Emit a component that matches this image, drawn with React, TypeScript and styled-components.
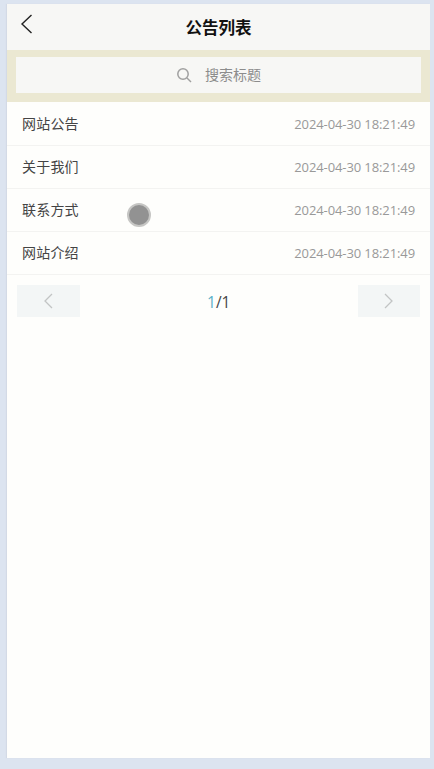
import React from "react";
import styled, { createGlobalStyle } from "styled-components";

const Global = createGlobalStyle`
  html, body { margin: 0; padding: 0; background: #dce4f0; }
  body { font-family: "Open Sans", "Noto Sans CJK SC", sans-serif; }
`;

const Page = styled.div`
  width: 434px;
  height: 769px;
  padding: 4px 4px 11px 7px;
  box-sizing: border-box;
  overflow: hidden;
`;

const Card = styled.div`
  position: relative;
  height: 754px;
  background: #fefefc;
  box-shadow: -1px 0 1px #d3dae6;
`;

const Header = styled.header`
  position: relative;
  height: 46px;
  background: #f7f7f5;
  display: flex;
  align-items: center;
  justify-content: center;
`;

const BackIcon = styled.svg`
  position: absolute;
  left: 13px;
  top: 10px;
`;

const Title = styled.h1`
  margin: 0;
  font: 700 16.5px "Noto Sans CJK SC", sans-serif;
  color: #111;
`;

const SearchBand = styled.div`
  height: 52px;
  padding: 7px 9px 9px;
  box-sizing: border-box;
  background: #ebe8d2;
`;

const SearchBox = styled.div`
  height: 36px;
  background: #f7f7f5;
  display: flex;
  align-items: center;
  justify-content: center;
  gap: 13px;
  color: #8c8c8c;
  font: 400 14px "Noto Sans CJK SC", sans-serif;
`;

const SearchText = styled.span`
  margin-top: -2px;
`;

const List = styled.ul`
  list-style: none;
  margin: 1px 0 0;
  padding: 0;
`;

const Row = styled.li`
  height: 43px;
  box-sizing: border-box;
  padding: 0 15px 1px;
  border-bottom: 1px solid #f3f3f1;
  display: flex;
  align-items: center;
  justify-content: space-between;
`;

const RowTitle = styled.span`
  margin-top: -2px;
  font: 400 14px "Noto Sans CJK SC", sans-serif;
  letter-spacing: 0.2px;
  color: #444;
`;

const RowDate = styled.span`
  font: 400 13px "Open Sans", sans-serif;
  letter-spacing: -0.1px;
  color: #999;
`;

const Pager = styled.nav`
  display: flex;
  align-items: center;
  justify-content: space-between;
  padding: 10px 9.5px 0 10px;
`;

const PagerButton = styled.div`
  width: 62.7px;
  height: 32px;
  background: #f3f6f6;
  display: flex;
  align-items: center;
  justify-content: center;
`;

const PageText = styled.span`
  margin-top: 2px;
  font: 400 15.5px "Open Sans", sans-serif;
  color: #444;
`;

const Current = styled.span`
  color: #5ab0c8;
`;

const Dot = styled.div`
  position: absolute;
  left: 120px;
  top: 199px;
  width: 24px;
  height: 24px;
  box-sizing: border-box;
  border-radius: 50%;
  background: #929292;
  border: 2px solid #c6c6c4;
`;

const rows = ["网站公告", "关于我们", "联系方式", "网站介绍"];

export default function App() {
  return (
    <Page>
      <Global />
      <Card>
        <Header>
          <BackIcon width="13" height="20" viewBox="0 0 13 20" fill="none" stroke="#222" strokeWidth="1.4">
            <path d="M11.5 1 2 10 l9.5 9" />
          </BackIcon>
          <Title>公告列表</Title>
        </Header>
        <SearchBand>
          <SearchBox>
            <svg width="16" height="16" viewBox="0 0 16 16" fill="none" stroke="#a0a0a0" strokeWidth="1.5">
              <circle cx="7" cy="7" r="5.2" />
              <path d="M11 11l4 4" />
            </svg>
            <SearchText>搜索标题</SearchText>
          </SearchBox>
        </SearchBand>
        <List>
          {rows.map((r) => (
            <Row key={r}>
              <RowTitle>{r}</RowTitle>
              <RowDate>2024-04-30 18:21:49</RowDate>
            </Row>
          ))}
        </List>
        <Pager>
          <PagerButton>
            <svg width="10" height="16" viewBox="0 0 10 16" fill="none" stroke="#c2c4c4" strokeWidth="1.3">
              <path d="M9 1 2 8l7 7" />
            </svg>
          </PagerButton>
          <PageText>
            <Current>1</Current>/1
          </PageText>
          <PagerButton>
            <svg width="10" height="16" viewBox="0 0 10 16" fill="none" stroke="#c2c4c4" strokeWidth="1.3">
              <path d="M1 1l7 7-7 7" />
            </svg>
          </PagerButton>
        </Pager>
        <Dot />
      </Card>
    </Page>
  );
}
